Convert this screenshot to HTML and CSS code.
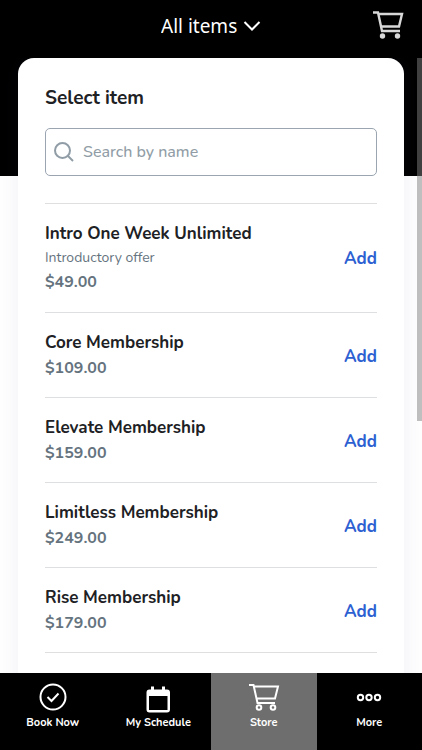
FILE: index.html
```html
<!DOCTYPE html>
<html lang="en">
<head>
<meta charset="utf-8">
<meta name="viewport" content="width=device-width, initial-scale=1">
<title>Store</title>
<link rel="stylesheet" href="styles.css">
</head>
<body>
<div class="app">
  <header class="topbar">
    <label class="filter">
      <select class="filter-select" aria-label="Item category">
        <option>All items</option>
      </select>
      <svg class="filter-chevron" viewBox="0 0 18 12" aria-hidden="true"><path d="M1.500 2l7.500 7.500 7.500-7.500"/></svg>
    </label>
    <button class="cart" type="button" aria-label="Cart">
      <svg class="cart-icon" viewBox="0 0 32 30" aria-hidden="true">
        <path d="M1 1.500h5l4 18.500h18M6.500 3H30l-3 12.500H9.500"/>
        <circle cx="10.500" cy="25" r="2.700"/><circle cx="25.500" cy="25" r="2.700"/>
      </svg>
    </button>
  </header>

  <main class="content">
    <section class="card">
      <h1 class="card-title">Select item</h1>
      <div class="search">
        <svg class="search-icon" viewBox="0 0 20 20" aria-hidden="true"><circle cx="8.500" cy="8.500" r="7.500"/><path d="M14 14l5 5"/></svg>
        <input class="search-input" type="text" placeholder="Search by name" aria-label="Search by name">
      </div>
      <ul class="items">
        <li class="item">
          <div class="item-info"><h2 class="item-name">Intro One Week Unlimited</h2><p class="item-note">Introductory offer</p><p class="item-price">$49.00</p></div>
          <button class="add" type="button">Add</button>
        </li>
        <li class="item">
          <div class="item-info"><h2 class="item-name">Core Membership</h2><p class="item-price">$109.00</p></div>
          <button class="add" type="button">Add</button>
        </li>
        <li class="item">
          <div class="item-info"><h2 class="item-name">Elevate Membership</h2><p class="item-price">$159.00</p></div>
          <button class="add" type="button">Add</button>
        </li>
        <li class="item">
          <div class="item-info"><h2 class="item-name">Limitless Membership</h2><p class="item-price">$249.00</p></div>
          <button class="add" type="button">Add</button>
        </li>
        <li class="item">
          <div class="item-info"><h2 class="item-name">Rise Membership</h2><p class="item-price">$179.00</p></div>
          <button class="add" type="button">Add</button>
        </li>
      </ul>
    </section>
    <div class="scroll-thumb"></div>
  </main>

  <nav class="tabs">
    <a class="tab" href="#book">
      <svg class="tab-icon" viewBox="0 0 30 28" aria-hidden="true"><circle cx="15" cy="14" r="12.500"/><path d="M9.500 14l4 4 7-7.500"/></svg>
      <span>Book Now</span>
    </a>
    <a class="tab" href="#schedule">
      <svg class="tab-icon" viewBox="0 0 30 28" aria-hidden="true">
        <path class="solid" d="M8 3.500h3v3h8v-3h3v3h2a3 3 0 0 1 3 3V26.500a3 3 0 0 1-3 3H6.500a3 3 0 0 1-3-3V9.500a3 3 0 0 1 3-3H8z"/>
        <path class="hole" d="M6 13h18.500v14H6z"/>
      </svg>
      <span>My Schedule</span>
    </a>
    <a class="tab tab-active" href="#store" aria-current="page">
      <svg class="tab-icon" viewBox="0 0 30 28" aria-hidden="true">
        <path d="M0 2h4.500L8.500 20H26M5 3.500h24l-3 12H7.500"/>
        <circle cx="10" cy="24.500" r="2.300"/><circle cx="24" cy="24.500" r="2.300"/>
      </svg>
      <span>Store</span>
    </a>
    <a class="tab" href="#more">
      <svg class="tab-icon" viewBox="0 0 30 28" aria-hidden="true"><circle cx="6.500" cy="14.500" r="2.700"/><circle cx="15" cy="14.500" r="2.700"/><circle cx="23.500" cy="14.500" r="2.700"/></svg>
      <span>More</span>
    </a>
  </nav>
</div>
</body>
</html>
```
FILE: styles.css
```css
* { box-sizing: border-box; }

body {
  margin: 0;
  background: #fff;
  color: #202124;
  font-family: Nunito, "Open Sans", sans-serif;
}

h1, h2, p, ul { margin: 0; padding: 0; }

svg { fill: none; stroke: currentColor; stroke-width: 2; }

button, input, select {
  padding: 0;
  border: 0;
  background: none;
  color: inherit;
  font: inherit;
}

.app {
  display: flex;
  flex-direction: column;
  height: 100vh;
}

.topbar {
  display: grid;
  grid-template-columns: 1fr auto 1fr;
  align-items: center;
  padding: 4px 18px 10px;
  background: #000;
  color: #fff;
}

.filter {
  grid-column: 2;
  display: flex;
  align-items: center;
  gap: 5px;
  font-family: "Noto Sans", sans-serif;
  font-size: 19px;
}

.filter-select { appearance: none; line-height: 28px; }
.filter-select option { color: #000; }
.filter-chevron { width: 18px; height: 12px; }

.cart {
  justify-self: end;
  height: 44px;
  color: #d8d8d8;
}

.cart-icon { display: block; width: 32px; height: 30px; }
.cart-icon path { stroke-width: 2.4; }
.cart-icon circle { fill: currentColor; stroke: none; }

.content {
  position: relative;
  flex: 1;
  min-height: 0;
  overflow: hidden;
  padding: 0 18px;
  background: linear-gradient(#000 118px, #fff 118px);
}

.card {
  padding: 27px 27px 80px;
  border-radius: 16px;
  background: #fff;
  box-shadow: 0 0 24px rgba(60, 60, 140, 0.08);
}

.card-title {
  font-size: 19px;
  font-weight: 700;
  line-height: 26px;
}

.search {
  display: flex;
  align-items: center;
  gap: 9px;
  height: 48px;
  margin: 17px 0 27px;
  padding: 0 8px;
  border: 1px solid #9aa5b1;
  border-radius: 5px;
  color: #919da6;
}

.search-icon { flex: none; width: 20px; height: 20px; }

.search-input {
  flex: 1;
  min-width: 0;
  outline: 0;
  font-size: 16px;
  font-weight: 500;
}

.search-input::placeholder { color: #919da6; opacity: 1; }

.items { list-style: none; border-bottom: 1px solid #dedfe1; }

.item {
  display: flex;
  align-items: center;
  justify-content: space-between;
  padding: 17px 0 15px;
  border-top: 1px solid #dedfe1;
}

.item:first-child { padding-bottom: 16px; }

.item-name, .item-price, .add {
  font-size: 17px;
  font-weight: 700;
  line-height: 25px;
}

.item-price {
  color: #65737e;
  font-size: 16px;
  line-height: 27px;
}

.item-note {
  color: #65737e;
  font-size: 14px;
  line-height: 23px;
}

.add { color: #2d61d2; }

.scroll-thumb {
  position: absolute;
  top: 0;
  right: 0;
  width: 5px;
  height: 59%;
  background: rgba(128, 128, 128, 0.5);
}

.tabs {
  display: grid;
  grid-template-columns: repeat(4, 1fr);
  background: #000;
}

.tab {
  display: flex;
  flex-direction: column;
  align-items: center;
  gap: 3px;
  padding: 10px 0 18px;
  color: #fff;
  font-size: 11px;
  font-weight: 700;
  line-height: 18px;
  text-decoration: none;
}

.tab-active { background: #6e6e6e; }
.tab-icon { width: 30px; height: 28px; overflow: visible; }
.solid { fill: currentColor; stroke: none; }
.hole { fill: #000; stroke: none; }
```
